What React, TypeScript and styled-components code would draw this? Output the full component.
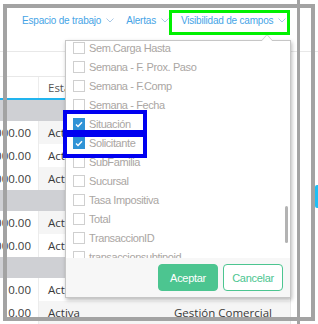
import styled, { createGlobalStyle } from "styled-components";

const GlobalStyle = createGlobalStyle`
  html, body {
    margin: 0;
    padding: 0;
    background: #ffffff;
  }
  body {
    width: 318px;
    height: 324px;
    overflow: hidden;
  }
`;

const Screen = styled.div`
  position: relative;
  display: flex;
  width: 318px;
  height: 324px;
  overflow: hidden;
  background: #ffffff;
  font-family: "Liberation Sans", Arial, sans-serif;
`;

const Main = styled.div`
  display: flex;
  flex-direction: column;
  width: 291px;
  flex-shrink: 0;
`;

const Toolbar = styled.div`
  display: flex;
  align-items: flex-start;
  gap: 12px;
  height: 54px;
  box-sizing: border-box;
  padding: 14px 0 0 22px;
  border-bottom: 1px solid #e8e8e8;
  width: 318px;
`;

const MenuItem = styled.div`
  display: flex;
  align-items: center;
  gap: 5px;
  height: 12px;
  font-size: 10px;
  letter-spacing: -0.2px;
  color: #46a4e6;
  white-space: nowrap;
`;

const SubBar = styled.div`
  height: 26px;
  box-sizing: border-box;
  border-bottom: 1px solid #e8e8e8;
`;

const Table = styled.div`
  display: flex;
  flex-direction: column;
  border-right: 1px solid #e8e8e8;
  font-family: "Open Sans", "Liberation Sans", sans-serif;
  font-size: 11.5px;
  color: #3a3a3a;
`;

const Row = styled.div`
  display: grid;
  grid-template-columns: 39px 126px 1fr;
  height: 23px;
`;

const HeaderRow = styled(Row)`
  box-sizing: border-box;
  border-bottom: 2px solid #22b4ee;
  color: #555555;
`;

const GroupRow = styled.div`
  height: 21px;
  background: #cfd0d4;
`;

const Cell = styled.div<{ $striped?: boolean }>`
  display: flex;
  align-items: center;
  padding-left: 9px;
  white-space: nowrap;
  overflow: hidden;
  background: ${(p) => (p.$striped ? "#f5f5f5" : "#ffffff")};
`;

const AmountCell = styled.div`
  display: flex;
  align-items: center;
  justify-content: flex-end;
  padding-right: 7px;
  white-space: nowrap;
  border-right: 1px solid #ececec;
  background: #ffffff;
`;

const Side = styled.div`
  flex: 1;
  display: flex;
  justify-content: space-between;
  padding-left: 6px;
`;

const SideRule = styled.div`
  width: 3px;
  background: #a3a3a3;
`;

const SideTab = styled.div`
  margin-top: 185px;
  width: 3px;
  height: 23px;
  border-radius: 2px 0 0 2px;
  background: #1ebff4;
`;

/* dropdown panel */
const Popup = styled.div`
  position: absolute;
  left: 65px;
  top: 40px;
  width: 226px;
  height: 258px;
  box-sizing: border-box;
  display: flex;
  flex-direction: column;
  background: #ffffff;
  border: 1px solid #c6c6c6;
  box-shadow: 1px 2px 4px rgba(0, 0, 0, 0.28);

  &::before,
  &::after {
    content: "";
    position: absolute;
    left: 195px;
    border-left: 6px solid transparent;
    border-right: 6px solid transparent;
  }
  &::before {
    top: -7px;
    border-bottom: 7px solid #c6c6c6;
  }
  &::after {
    top: -6px;
    border-bottom: 7px solid #ffffff;
  }
`;

const FieldList = styled.div`
  position: relative;
  height: 217px;
  overflow: hidden;
`;

const FieldItems = styled.div`
  margin-top: -2.5px;
`;

const Field = styled.label`
  display: flex;
  align-items: center;
  gap: 4px;
  height: 19px;
  padding-left: 7px;
  font-size: 11px;
  letter-spacing: -0.4px;
  color: #aaa6a3;
  white-space: nowrap;
`;

const Box = styled.span<{ $checked?: boolean }>`
  display: flex;
  align-items: center;
  justify-content: center;
  width: 12px;
  height: 12px;
  box-sizing: border-box;
  border: 1px solid ${(p) => (p.$checked ? "#2f93d6" : "#cfcfcf")};
  background: ${(p) => (p.$checked ? "#2f93d6" : "#ffffff")};
`;

const ScrollThumb = styled.div`
  position: absolute;
  right: 2px;
  top: 165px;
  width: 3px;
  height: 37px;
  border-radius: 2px;
  background: #b3b3b3;
`;

const Footer = styled.div`
  flex: 1;
  display: flex;
  align-items: center;
  justify-content: flex-end;
  gap: 5px;
  padding-right: 7px;
  background: #f7f7f7;
`;

const Button = styled.button<{ $primary?: boolean }>`
  width: 60px;
  height: 27px;
  padding: 0;
  border-radius: 4px;
  font-family: "Liberation Sans", Arial, sans-serif;
  font-size: 11px;
  letter-spacing: -0.3px;
  border: 1px solid #4cc590;
  background: ${(p) => (p.$primary ? "#4cc590" : "#ffffff")};
  color: ${(p) => (p.$primary ? "#ffffff" : "#4cc590")};
`;

/* annotation overlays */
const Frame = styled.div`
  position: absolute;
  left: 3px;
  top: 4px;
  width: 312px;
  height: 317px;
  box-sizing: border-box;
  border: 4px solid #a3a3a3;
  pointer-events: none;
`;

const Highlight = styled.div<{ $color: string; $w: number }>`
  position: absolute;
  box-sizing: border-box;
  border: ${(p) => p.$w}px solid ${(p) => p.$color};
  pointer-events: none;
`;

const Chevron = () => (
  <svg width="8" height="5" viewBox="0 0 8 5">
    <polyline points="0.5,0.5 4,4 7.5,0.5" fill="none" stroke="#a9c8e6" strokeWidth="1" />
  </svg>
);

const Check = () => (
  <svg width="8" height="7" viewBox="0 0 8 7">
    <polyline points="1,3.6 3,5.5 7,1.2" fill="none" stroke="#ffffff" strokeWidth="1.4" />
  </svg>
);

const fields: { name: string; checked?: boolean }[] = [
  { name: "Sem.Carga Hasta" },
  { name: "Semana - F. Prox. Paso" },
  { name: "Semana - F.Comp" },
  { name: "Semana - Fecha" },
  { name: "Situación", checked: true },
  { name: "Solicitante", checked: true },
  { name: "SubFamilia" },
  { name: "Sucursal" },
  { name: "Tasa Impositiva" },
  { name: "Total" },
  { name: "TransaccionID" },
  { name: "transaccionsubtipoid" },
];

type Line = { amount: string; striped: boolean };

const groups: Line[][] = [
  [
    { amount: "1,000.00", striped: true },
    { amount: "1,000.00", striped: false },
    { amount: "2,000.00", striped: true },
  ],
  [
    { amount: "5,000.00", striped: true },
    { amount: "5,000.00", striped: false },
  ],
  [
    { amount: "0.00", striped: false },
    { amount: "0.00", striped: true },
  ],
];

export default function App() {
  return (
    <>
      <GlobalStyle />
      <Screen>
        <Main>
          <Toolbar>
            <MenuItem>
              Espacio de trabajo <Chevron />
            </MenuItem>
            <MenuItem>
              Alertas <Chevron />
            </MenuItem>
            <MenuItem>
              Visibilidad de campos <Chevron />
            </MenuItem>
          </Toolbar>
          <SubBar />
          <Table>
            <HeaderRow>
              <AmountCell />
              <Cell>Estado</Cell>
              <Cell>Área</Cell>
            </HeaderRow>
            {groups.map((lines, gi) => (
              <div key={gi}>
                <GroupRow />
                {lines.map((l, i) => (
                  <Row key={i}>
                    <AmountCell>{l.amount}</AmountCell>
                    <Cell $striped={l.striped}>Activa</Cell>
                    <Cell $striped={l.striped}>Gestión Comercial</Cell>
                  </Row>
                ))}
              </div>
            ))}
          </Table>
        </Main>
        <Side>
          <SideRule />
          <SideTab />
        </Side>

        <Popup>
          <FieldList>
            <FieldItems>
              {fields.map((f) => (
                <Field key={f.name}>
                  <Box $checked={f.checked}>{f.checked ? <Check /> : null}</Box>
                  {f.name}
                </Field>
              ))}
            </FieldItems>
            <ScrollThumb />
          </FieldList>
          <Footer>
            <Button $primary>Aceptar</Button>
            <Button>Cancelar</Button>
          </Footer>
        </Popup>

        <Frame />
        <Highlight $color="#00f000" $w={3} style={{ left: 169, top: 10, width: 121, height: 25 }} />
        <Highlight $color="#0000f0" $w={4} style={{ left: 63, top: 110, width: 84, height: 24 }} />
        <Highlight $color="#0000f0" $w={4} style={{ left: 63, top: 133, width: 84, height: 25 }} />
      </Screen>
    </>
  );
}
